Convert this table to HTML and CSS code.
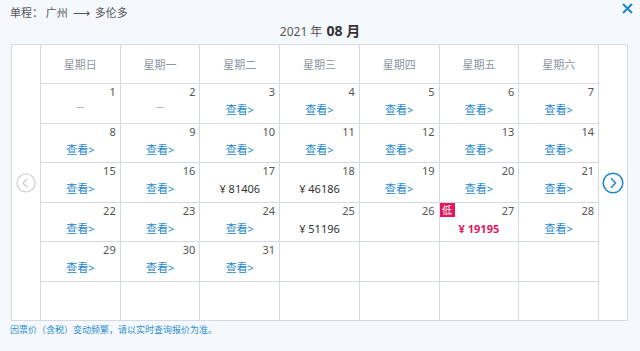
FILE: index.html
```html
<!DOCTYPE html>
<html lang="zh">
<head>
<meta charset="utf-8">
<link rel="stylesheet" href="styles.css">
</head>
<body>
<div class="page">
  <div class="route">单程：&nbsp;广州 <span class="arr">⟶</span> 多伦多</div>
  <svg class="close" width="11" height="11" viewBox="0 0 11 11"><path d="M1 1L10 10M10 1L1 10" stroke="#1b87d1" stroke-width="2" fill="none"/></svg>
  <div class="month"><span class="yr">2021 年</span> <b>08 月</b></div>
  <div class="cal">
    <div class="side">
      <svg width="20" height="20" viewBox="0 0 20 20"><circle cx="10" cy="10" r="9" fill="none" stroke="#c9cdd3" stroke-width="1.2"/><path d="M11.5 5.5L7 10l4.5 4.5" fill="none" stroke="#c9cdd3" stroke-width="1.2"/></svg>
    </div>
    <div class="grid">
      <div class="wk">星期日</div><div class="wk">星期一</div><div class="wk">星期二</div><div class="wk">星期三</div><div class="wk">星期四</div><div class="wk">星期五</div><div class="wk">星期六</div>

      <div class="c"><span class="n">1</span><span class="none">--</span></div>
      <div class="c"><span class="n">2</span><span class="none">--</span></div>
      <div class="c"><span class="n">3</span><span class="v">查看&gt;</span></div>
      <div class="c"><span class="n">4</span><span class="v">查看&gt;</span></div>
      <div class="c"><span class="n">5</span><span class="v">查看&gt;</span></div>
      <div class="c"><span class="n">6</span><span class="v">查看&gt;</span></div>
      <div class="c"><span class="n">7</span><span class="v">查看&gt;</span></div>

      <div class="c"><span class="n">8</span><span class="v">查看&gt;</span></div>
      <div class="c"><span class="n">9</span><span class="v">查看&gt;</span></div>
      <div class="c"><span class="n">10</span><span class="v">查看&gt;</span></div>
      <div class="c"><span class="n">11</span><span class="v">查看&gt;</span></div>
      <div class="c"><span class="n">12</span><span class="v">查看&gt;</span></div>
      <div class="c"><span class="n">13</span><span class="v">查看&gt;</span></div>
      <div class="c"><span class="n">14</span><span class="v">查看&gt;</span></div>

      <div class="c"><span class="n">15</span><span class="v">查看&gt;</span></div>
      <div class="c"><span class="n">16</span><span class="v">查看&gt;</span></div>
      <div class="c"><span class="n">17</span><span class="p">¥&nbsp;81406</span></div>
      <div class="c"><span class="n">18</span><span class="p">¥&nbsp;46186</span></div>
      <div class="c"><span class="n">19</span><span class="v">查看&gt;</span></div>
      <div class="c"><span class="n">20</span><span class="v">查看&gt;</span></div>
      <div class="c"><span class="n">21</span><span class="v">查看&gt;</span></div>

      <div class="c"><span class="n">22</span><span class="v">查看&gt;</span></div>
      <div class="c"><span class="n">23</span><span class="v">查看&gt;</span></div>
      <div class="c"><span class="n">24</span><span class="v">查看&gt;</span></div>
      <div class="c"><span class="n">25</span><span class="p">¥&nbsp;51196</span></div>
      <div class="c"><span class="n">26</span></div>
      <div class="c low"><span class="badge">低</span><span class="n">27</span><span class="p red">¥&nbsp;19195</span></div>
      <div class="c"><span class="n">28</span><span class="v">查看&gt;</span></div>

      <div class="c"><span class="n">29</span><span class="v">查看&gt;</span></div>
      <div class="c"><span class="n">30</span><span class="v">查看&gt;</span></div>
      <div class="c"><span class="n">31</span><span class="v">查看&gt;</span></div>
      <div class="c"></div><div class="c"></div><div class="c"></div><div class="c"></div>

      <div class="c"></div><div class="c"></div><div class="c"></div><div class="c"></div><div class="c"></div><div class="c"></div><div class="c"></div>
    </div>
    <div class="side">
      <svg width="22" height="22" viewBox="0 0 22 22"><circle cx="11" cy="11" r="9.8" fill="none" stroke="#1b87d1" stroke-width="1.5"/><path d="M9 6.3l4.6 4.7L9 15.7" fill="none" stroke="#1b87d1" stroke-width="1.5"/></svg>
    </div>
  </div>
  <div class="note">因票价（含税）变动频繁，请以实时查询报价为准。</div>
</div>
</body>
</html>
```

FILE: styles.css
```css
* { box-sizing: border-box; }
html, body { margin: 0; padding: 0; }
body {
  background: #f5f9fd;
  font-family: "Noto Sans", "Noto Sans CJK SC", sans-serif;
  color: #444;
  width: 640px;
  height: 351px;
  overflow: hidden;
}
.page { position: relative; padding-top: 5px; }
.route {
  padding-left: 10px;
  font-size: 11px;
  line-height: 16px;
  height: 16px;
  color: #555;
}
.arr { margin: 0 2px; font-family: "DejaVu Sans", sans-serif; font-size: 12px; }
.close { position: absolute; right: 7px; top: 3px; }
.month {
  text-align: center;
  height: 23px;
  line-height: 18px;
  color: #444;
}
.month .yr { font-size: 12px; color: #555; }
.month b { font-size: 14px; color: #333; }
.cal {
  margin-left: 11px;
  width: 617px;
  height: 277px;
  background: #fff;
  border: 1px solid #d3dae5;
  display: flex;
}
.side {
  width: 28px;
  display: flex;
  align-items: center;
  justify-content: center;
}
.grid {
  width: 559px;
  height: 275px;
  border-left: 1px solid #d3dae5;
  border-right: 1px solid #d3dae5;
  background: #d3dae5;
  display: grid;
  grid-template-columns: repeat(7, 1fr);
  grid-template-rows: 38px repeat(6, 1fr);
  gap: 1px;
}
.wk {
  background: #fff;
  display: flex;
  align-items: center;
  justify-content: center;
  font-size: 11px;
  color: #8f959e;
}
.c {
  background: #fff;
  position: relative;
  display: flex;
  flex-direction: column;
  align-items: center;
  padding-top: 1px;
}
.n {
  align-self: flex-end;
  padding-right: 4px;
  font-size: 11px;
  line-height: 14px;
  color: #555;
}
.v, .p, .none {
  margin-top: 4px;
  font-size: 11px;
  line-height: 14px;
}
.v { color: #1b87d1; }
.p { color: #333; }
.none { color: #9a9a9a; margin-top: 0; }
.red { color: #e3175b; font-weight: bold; }
.badge {
  position: absolute;
  left: 0;
  top: 0;
  width: 15px;
  height: 14px;
  background: #e3175b;
  color: #fff;
  font-size: 10px;
  line-height: 14px;
  text-align: center;
}
.note {
  padding-left: 10px;
  margin-top: 2px;
  font-size: 9px;
  line-height: 14px;
  color: #2d8fd2;
}
```
